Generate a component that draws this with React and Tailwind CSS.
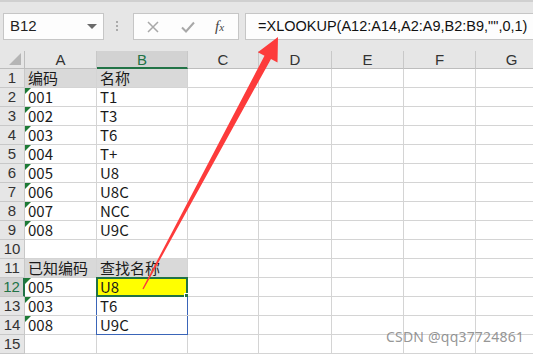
import React from 'react';

const cols = [
  { key: 'A', w: 72 },
  { key: 'B', w: 91 },
  { key: 'C', w: 71 },
  { key: 'D', w: 73 },
  { key: 'E', w: 72 },
  { key: 'F', w: 72 },
  { key: 'G', w: 72 },
];

const data = {
  1: ['编码', '名称'],
  2: ['001', 'T1'],
  3: ['002', 'T3'],
  4: ['003', 'T6'],
  5: ['004', 'T+'],
  6: ['005', 'U8'],
  7: ['006', 'U8C'],
  8: ['007', 'NCC'],
  9: ['008', 'U9C'],
  11: ['已知编码', '查找名称'],
  12: ['005', 'U8'],
  13: ['003', 'T6'],
  14: ['008', 'U9C'],
};

const textRows = [2, 3, 4, 5, 6, 7, 8, 9, 12, 13, 14];
const rows = Array.from({ length: 15 }, (_, i) => i + 1);

const Flag = () => (
  <div className="absolute left-0 top-0 w-0 h-0 border-t-[6px] border-r-[6px] border-t-[#1d7a35] border-r-transparent" />
);

const Cell = ({ row, col }) => {
  const vals = data[row];
  const text = vals && col < 2 ? vals[col] : '';
  const grayRow = (row === 1 || row === 11) && col < 2;
  const isSel = row === 12 && col === 1;
  let bg = 'bg-white';
  if (grayRow) bg = 'bg-[#d9d9d9]';
  if (isSel) bg = 'bg-[#ffff00]';

  return (
    <div className={`relative h-[19px] border-r border-b border-[#d4d4d4] ${bg} flex items-end pl-[3px] text-[15px] leading-[18px] text-[#1a1a1a] whitespace-nowrap`}>
      {col === 0 && textRows.includes(row) && <Flag />}
      <span>{text}</span>
      {isSel && (
        <>
          <div className="absolute -left-px -top-px -right-px -bottom-px border-2 border-[#217346]" />
          <div className="absolute -right-[4px] -bottom-[4px] w-[7px] h-[7px] bg-[#217346] border border-white" />
        </>
      )}
      {col === 1 && (row === 13 || row === 14) && (
        <div className={`absolute -left-px top-0 -right-px ${row === 14 ? '-bottom-px border-b' : 'bottom-0'} border-l border-r border-[#3a65b8]`} />
      )}
    </div>
  );
};

export default function App() {
  return (
    <div className="relative w-[533px] h-[355px] overflow-hidden bg-white font-['Noto_Sans_CJK_SC',sans-serif]">
      {/* formula bar */}
      <div className="h-[51px] bg-[#e6e6e6] border-t-2 border-t-[#d0d0d0] pt-[11px] flex items-start">
        <div className="ml-[3px] w-[101px] h-[27px] bg-[#fdfdfd] border border-[#c6c6c6] flex items-center pl-[6px] pr-[6px]">
          <span className="text-[15px] text-[#222] font-['Liberation_Sans',sans-serif]">B12</span>
          <div className="ml-auto w-0 h-0 border-l-[5px] border-r-[5px] border-t-[5px] border-l-transparent border-r-transparent border-t-[#6a6a6a]" />
        </div>
        <div className="ml-[12px] mt-[8px] flex flex-col gap-[2px]">
          <div className="w-[2px] h-[2px] bg-[#aaa]" />
          <div className="w-[2px] h-[2px] bg-[#aaa]" />
          <div className="w-[2px] h-[2px] bg-[#aaa]" />
        </div>
        <div className="ml-[15px] w-[106px] h-[27px] bg-[#fdfdfd] border border-[#c6c6c6] flex items-center">
          <svg width="12" height="12" viewBox="0 0 12 12" className="ml-[13px]">
            <path d="M1 1L11 11M11 1L1 11" stroke="#a8a8a8" strokeWidth="1.5" />
          </svg>
          <svg width="14" height="12" viewBox="0 0 14 12" className="ml-[22px]">
            <path d="M1 6.5L5 10.5L13 1.5" stroke="#a8a8a8" strokeWidth="2" fill="none" />
          </svg>
          <span className="ml-[20px] text-[15px] italic text-[#444] font-['Liberation_Serif',serif] leading-none">
            f<span className="text-[11px]">x</span>
          </span>
        </div>
        <div className="ml-[6px] flex-1 h-[27px] bg-[#fdfdfd] border border-[#c6c6c6] border-r-0 flex items-center pl-[12px]">
          <span className="text-[14.5px] text-[#111] font-['Liberation_Sans',sans-serif] whitespace-nowrap">
            =XLOOKUP(A12:A14,A2:A9,B2:B9,"",0,1)
          </span>
        </div>
      </div>

      {/* grid */}
      <div className="grid grid-cols-[25px_72px_91px_71px_73px_72px_72px_72px]">
        <div className="relative h-[18px] bg-[#e6e6e6] border-r border-b border-[#bdbdbd]">
          <div className="absolute right-[3px] bottom-[3px] w-0 h-0 border-l-[11px] border-t-[11px] border-l-transparent border-t-transparent border-b-0 border-r-0" />
          <svg width="12" height="12" viewBox="0 0 12 12" className="absolute right-[3px] bottom-[3px]">
            <path d="M12 0L12 12L0 12Z" fill="#b5b5b5" />
          </svg>
        </div>
        {cols.map((c) => (
          <div
            key={c.key}
            className={`h-[18px] border-r border-[#c8c8c8] flex items-center justify-center text-[15px] leading-none font-['Liberation_Sans',sans-serif] ${
              c.key === 'B'
                ? 'bg-[#d2d2d2] text-[#217346] border-b-2 border-b-[#217346]'
                : 'bg-[#e6e6e6] text-[#333] border-b border-b-[#bdbdbd]'
            }`}
          >
            {c.key}
          </div>
        ))}

        {rows.map((r) => (
          <React.Fragment key={r}>
            <div
              className={`h-[19px] border-r border-b border-[#c8c8c8] flex items-end justify-center text-[15px] leading-[18px] font-['Liberation_Sans',sans-serif] ${
                r === 12 ? 'bg-[#d2d2d2] text-[#217346] border-r-2 border-r-[#217346]' : 'bg-[#e6e6e6] text-[#333]'
              }`}
            >
              {r}
            </div>
            {cols.map((c, ci) => (
              <Cell key={c.key} row={r} col={ci} />
            ))}
          </React.Fragment>
        ))}
      </div>

      {/* annotation arrow */}
      <svg className="absolute left-0 top-0 pointer-events-none" width="533" height="355" viewBox="0 0 533 355">
        <polygon
          points="278,37 277.5,62.5 271,59 143.6,289.3 142.4,288.7 264.5,55.7 257.8,52.2"
          fill="#fd3b3b"
        />
      </svg>

      {/* watermark */}
      <div className="absolute left-[386px] top-[326px] text-[14px] text-[#7a7a7a]/80 font-['Noto_Sans',sans-serif] tracking-[0.2px] pointer-events-none">
        CSDN @qq37724861
      </div>
    </div>
  );
}
